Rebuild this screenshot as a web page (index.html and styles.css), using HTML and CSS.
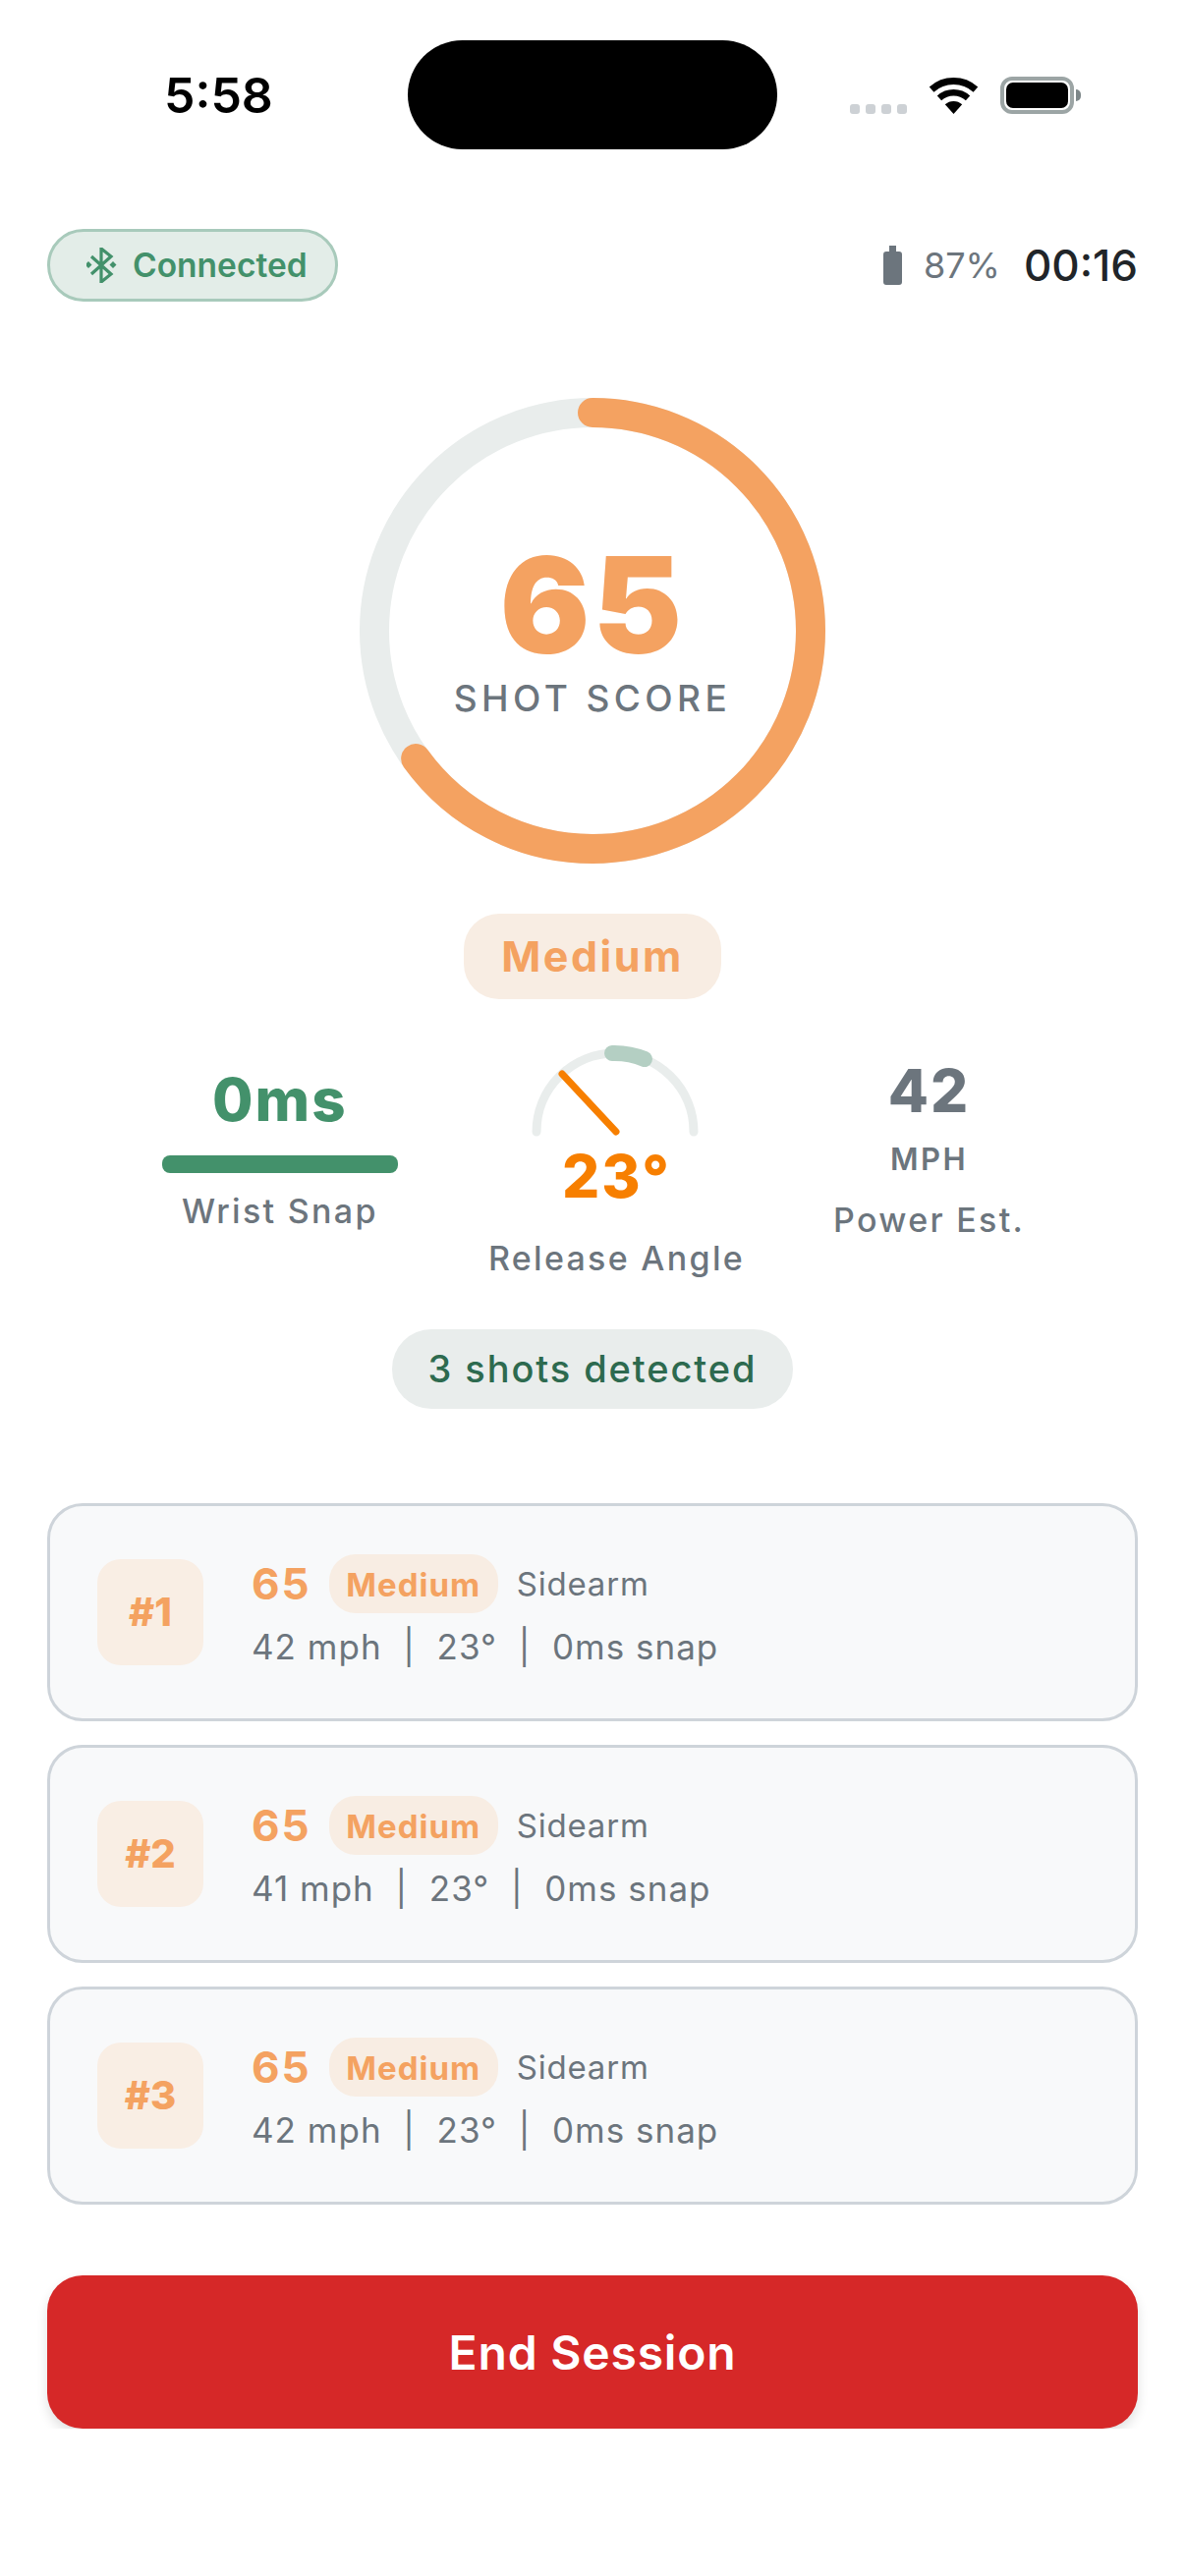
FILE: index.html
```html
<!DOCTYPE html>
<html>
<head>
	<meta charset="utf-8">
	<meta name="viewport" content="width=device-width, initial-scale=1">
	<title>Shot Session</title>
	<link rel="stylesheet" href="styles.css">
</head>

<body>
	<div class="status-bar">
		<div class="clock">5:58</div>
		<div class="island"></div>
		<div class="status-icons">
			<div class="signal"><i></i><i></i><i></i><i></i></div>
			<svg class="wifi" width="51" height="37" viewBox="0 0 51 37">
				<path d="M3.1 12.1A33.5 33.5 0 0 1 47.9 12.1" fill="none" stroke="#000" stroke-width="7"/>
				<path d="M10.95 20.8A21.75 21.75 0 0 1 40.05 20.8" fill="none" stroke="#000" stroke-width="6.5"/>
				<path d="M25.5 37L16.8 27.3A13 13 0 0 1 34.2 27.3Z" fill="#000"/>
			</svg>
			<div class="phone-battery"><div class="phone-battery-fill"></div></div>
		</div>
	</div>

	<div class="session-header">
		<div class="connection">
			<svg width="32" height="36" viewBox="0 0 32 36">
				<path d="M5 9L25 27L15 35V1L25 9L5 27" fill="none" stroke="#43916b" stroke-width="3.2"/>
				<path d="M2 14L5.5 17.500L2 21L-1.500 17.500Z M27 14L30.500 17.500L27 21L23.500 17.500Z" fill="#43916b"/>
			</svg>
			<span>Connected</span>
		</div>
		<div class="session-info">
			<svg width="19" height="40" viewBox="0 0 19 40">
				<path d="M6 0H13V6H16A3 3 0 0 1 19 9V37A3 3 0 0 1 16 40H3A3 3 0 0 1 0 37V9A3 3 0 0 1 3 6H6Z" fill="#6c757d"/>
			</svg>
			<span class="sensor-level">87%</span>
			<span class="timer">00:16</span>
		</div>
	</div>

	<div class="score-ring">
		<svg width="474" height="474" viewBox="0 0 474 474">
			<circle cx="237" cy="237" r="222" fill="none" stroke="#e9edec" stroke-width="30"/>
			<circle cx="237" cy="237" r="222" fill="none" stroke="#f4a261" stroke-width="30" stroke-linecap="round" stroke-dasharray="906.7 1394.9" transform="rotate(-90 237 237)"/>
		</svg>
		<div class="score-center">
			<div class="score-number">65</div>
			<div class="score-label">SHOT SCORE</div>
		</div>
	</div>

	<div class="speed-pill">Medium</div>

	<div class="stats">
		<div class="stat stat-snap">
			<div class="stat-value green">0ms</div>
			<div class="snap-bar"></div>
			<div class="stat-label">Wrist Snap</div>
		</div>
		<div class="stat">
			<svg class="gauge" width="190" height="110" viewBox="0 0 190 110">
				<path d="M15 94A80 80 0 0 1 175 94" fill="none" stroke="#e9edec" stroke-width="9" stroke-linecap="round"/>
				<path d="M92 14A80 80 0 0 1 125 20" fill="none" stroke="#b4cfc3" stroke-width="16" stroke-linecap="round" stroke-linejoin="round"/>
				<path d="M96 94L41 35" fill="none" stroke="#f77f00" stroke-width="7" stroke-linecap="round"/>
			</svg>
			<div class="stat-value orange gauge-value">23°</div>
			<div class="stat-label angle-label">Release Angle</div>
		</div>
		<div class="stat stat-power">
			<div class="stat-value gray">42</div>
			<div class="stat-unit">MPH</div>
			<div class="stat-label power-label">Power Est.</div>
		</div>
	</div>

	<div class="shots-pill">3 shots detected</div>

	<div class="shot-list">
		<div class="shot-card">
			<div class="shot-rank">#1</div>
			<div class="shot-body">
				<div class="shot-top">
					<span class="shot-score">65</span>
					<span class="shot-tag">Medium</span>
					<span class="shot-type">Sidearm</span>
				</div>
				<div class="shot-detail">42 mph&nbsp; |&nbsp; 23°&nbsp; |&nbsp; 0ms snap</div>
			</div>
		</div>
		<div class="shot-card">
			<div class="shot-rank">#2</div>
			<div class="shot-body">
				<div class="shot-top">
					<span class="shot-score">65</span>
					<span class="shot-tag">Medium</span>
					<span class="shot-type">Sidearm</span>
				</div>
				<div class="shot-detail">41 mph&nbsp; |&nbsp; 23°&nbsp; |&nbsp; 0ms snap</div>
			</div>
		</div>
		<div class="shot-card">
			<div class="shot-rank">#3</div>
			<div class="shot-body">
				<div class="shot-top">
					<span class="shot-score">65</span>
					<span class="shot-tag">Medium</span>
					<span class="shot-type">Sidearm</span>
				</div>
				<div class="shot-detail">42 mph&nbsp; |&nbsp; 23°&nbsp; |&nbsp; 0ms snap</div>
			</div>
		</div>
	</div>

	<button class="end-button">End Session</button>
</body>
</html>
```

FILE: styles.css
```css
body {
	margin: 0;
	background: #fff;
	font-family: Inter, "Liberation Sans", sans-serif;
	overflow: hidden;
	display: flex;
	flex-direction: column;
	align-items: center;
}

/* status bar */
.status-bar {
	width: 100%;
	box-sizing: border-box;
	margin-top: 41px;
	display: grid;
	grid-template-columns: 1fr 376px 1fr;
	align-items: center;
}
.clock {
	padding-left: 167px;
	padding-top: 2px;
	font-size: 50px;
	line-height: 109px;
	font-weight: 600;
	color: #000;
}
.island {
	height: 111px;
	border-radius: 56px;
	background: #000;
}
.status-icons {
	padding-left: 74px;
	display: flex;
	align-items: flex-end;
	height: 38px;
}
.signal {
	display: flex;
	gap: 6px;
}
.signal i {
	width: 10px;
	height: 10px;
	border-radius: 3px;
	background: #cdd1d5;
}
.wifi {
	margin-left: 22px;
}
.phone-battery {
	position: relative;
	box-sizing: border-box;
	width: 75px;
	height: 38px;
	margin-left: 22px;
	padding: 2px;
	border: 4px solid #9ca5a5;
	border-radius: 12px;
}
.phone-battery::after {
	content: "";
	position: absolute;
	left: 73px;
	top: 9px;
	width: 5px;
	height: 12px;
	border-radius: 0 6px 6px 0;
	background: #7d8789;
}
.phone-battery-fill {
	height: 100%;
	border-radius: 7px;
	background: #000;
}

/* connection row */
.session-header {
	width: 1110px;
	margin-top: 81px;
	display: flex;
	justify-content: space-between;
	align-items: center;
}
.connection {
	box-sizing: border-box;
	height: 74px;
	width: 296px;
	padding-left: 37px;
	display: flex;
	align-items: center;
	gap: 15px;
	background: #e3ede8;
	border: 3px solid #a8cabb;
	border-radius: 37px;
	color: #43916b;
	font-size: 33.5px;
	font-weight: 600;
}
.session-info {
	display: flex;
	align-items: center;
}
.sensor-level {
	margin-left: 22px;
	font-size: 36px;
	color: #6c757d;
}
.timer {
	margin-left: 24px;
	font-size: 44px;
	font-weight: 500;
	color: #212529;
}

/* score ring */
.score-ring {
	margin-top: 98px;
	display: grid;
	width: 474px;
	height: 474px;
}
.score-ring svg,
.score-center {
	grid-area: 1 / 1;
}
.score-center {
	display: flex;
	flex-direction: column;
	align-items: center;
	padding-top: 143px;
}
.score-number {
	font-size: 136px;
	line-height: 136px;
	font-weight: 900;
	letter-spacing: 3px;
	color: #f4a261;
}
.score-label {
	margin-top: 5px;
	font-size: 37px;
	line-height: 44px;
	font-weight: 500;
	letter-spacing: 4.4px;
	color: #6c757d;
}

.speed-pill {
	margin-top: 51px;
	width: 262px;
	height: 87px;
	line-height: 87px;
	text-align: center;
	border-radius: 36px;
	background: #f8ede3;
	color: #f4a261;
	font-size: 43px;
	font-weight: 700;
	letter-spacing: 2.5px;
}

/* three stats */
.stats {
	margin-top: 44px;
	padding-left: 2px;
	display: flex;
	justify-content: center;
	align-items: flex-start;
	gap: 92px;
}
.stat {
	display: flex;
	flex-direction: column;
	align-items: center;
}
.stat-snap {
	padding-top: 28px;
}
.stat-power {
	padding-top: 19px;
	margin-left: -2px;
}
.stat-value {
	font-size: 60px;
	line-height: 60px;
	font-weight: 800;
	letter-spacing: 2px;
}
.green { color: #43916b; }
.orange { color: #f77f00; }
.gray { color: #6c757d; }
.snap-bar {
	width: 240px;
	height: 18px;
	margin-top: 27px;
	border-radius: 8px;
	background: #43916b;
}
.stat-label {
	margin-top: 17px;
	font-size: 34px;
	line-height: 44px;
	font-weight: 500;
	letter-spacing: 2.3px;
	color: #6c757d;
}
.gauge {
	margin-top: -3px;
	margin-left: -2px;
}
.gauge-value {
	margin-top: -1px;
}
.angle-label {
	margin-top: 32px;
}
.stat-unit {
	margin-top: 20px;
	font-size: 31px;
	line-height: 40px;
	font-weight: 600;
	letter-spacing: 2.5px;
	color: #6c757d;
}
.power-label {
	margin-top: 20px;
}

.shots-pill {
	margin-top: 50px;
	box-sizing: border-box;
	width: 408px;
	height: 81px;
	line-height: 81px;
	text-align: center;
	border-radius: 40px;
	background: #e9edec;
	color: #2d6a4f;
	font-size: 38px;
	font-weight: 500;
	letter-spacing: 1.9px;
}

/* shot cards */
.shot-list {
	margin-top: 96px;
	width: 1110px;
	display: flex;
	flex-direction: column;
	gap: 24px;
}
.shot-card {
	box-sizing: border-box;
	height: 222px;
	padding-left: 48px;
	display: flex;
	align-items: center;
	gap: 49px;
	background: #f8f9fa;
	border: 3px solid #ced4da;
	border-radius: 36px;
}
.shot-rank {
	width: 108px;
	height: 108px;
	line-height: 108px;
	text-align: center;
	border-radius: 24px;
	background: #f9eee4;
	color: #f4a261;
	font-size: 40px;
	font-weight: 800;
}
.shot-body {
	display: flex;
	flex-direction: column;
	gap: 9px;
}
.shot-top {
	display: flex;
	align-items: center;
	height: 60px;
}
.shot-score {
	font-size: 44px;
	line-height: 62px;
	font-weight: 700;
	letter-spacing: 2px;
	color: #f4a261;
}
.shot-tag {
	margin-left: 18px;
	width: 172px;
	height: 60px;
	line-height: 62px;
	text-align: center;
	border-radius: 27px;
	background: #f8ede3;
	color: #f4a261;
	font-size: 33px;
	font-weight: 700;
	letter-spacing: 1px;
}
.shot-type {
	margin-left: 19px;
	font-size: 33px;
	line-height: 62px;
	letter-spacing: 0.8px;
	color: #6c757d;
}
.shot-detail {
	font-size: 35px;
	line-height: 50px;
	letter-spacing: 1px;
	color: #6c757d;
}

.end-button {
	margin-top: 72px;
	width: 1110px;
	height: 156px;
	border: 0;
	border-radius: 36px;
	background: #d62828;
	color: #fff;
	font-family: inherit;
	font-size: 48px;
	font-weight: 600;
	letter-spacing: 0.8px;
	box-shadow: 0 6px 12px rgba(0, 0, 0, 0.12);
}
```
